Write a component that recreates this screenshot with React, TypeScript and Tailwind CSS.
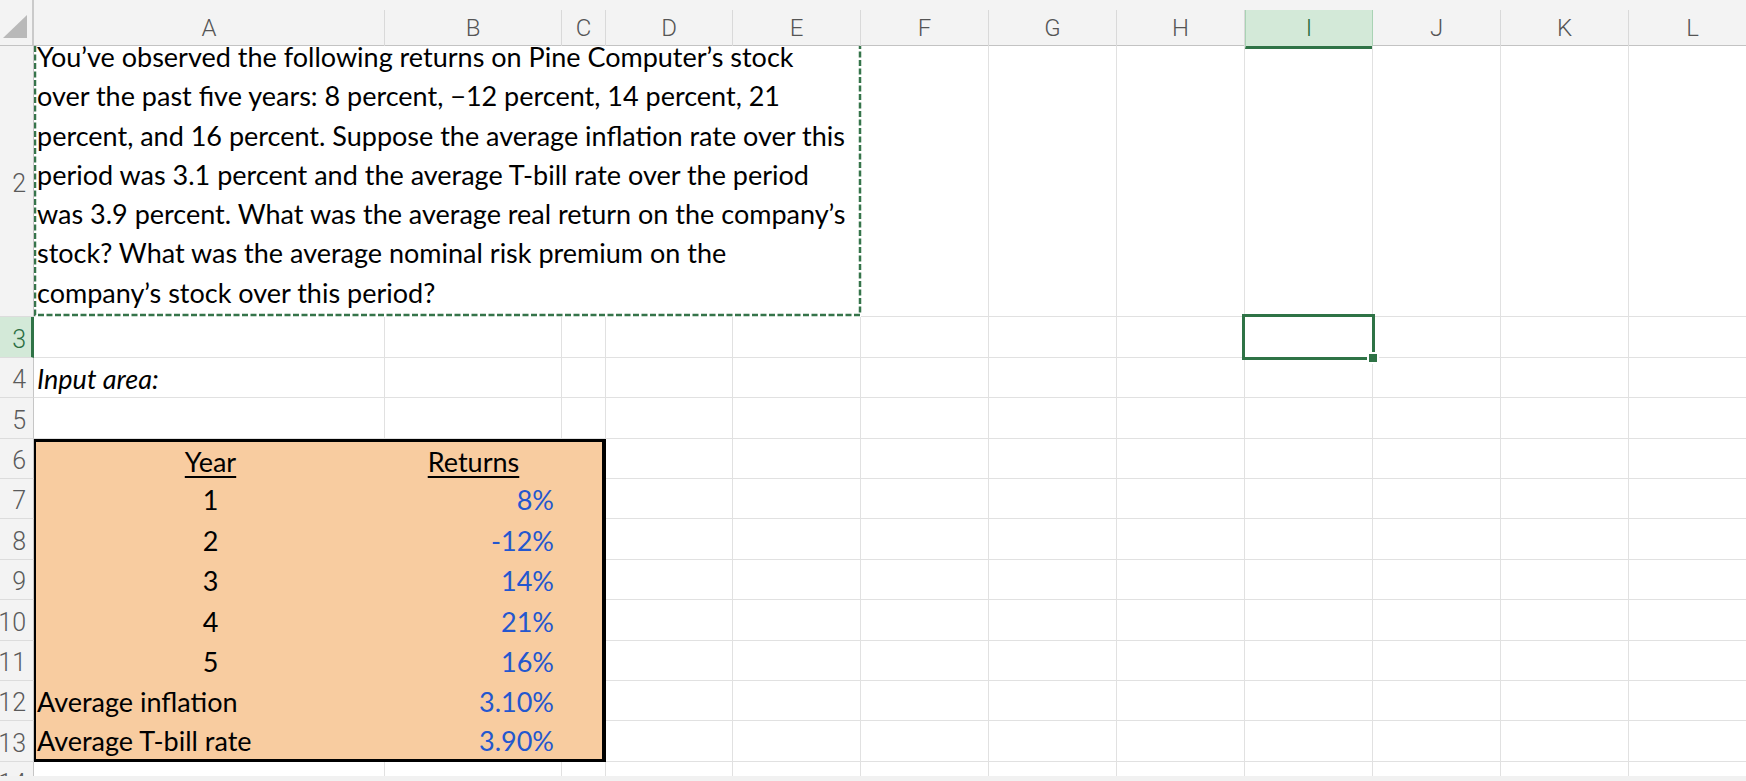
import React from 'react';

type Col = { k: string; w: string };

const COLS: Col[] = [
  { k: 'A', w: 'w-[351px]' },
  { k: 'B', w: 'w-[177px]' },
  { k: 'C', w: 'w-[44px]' },
  { k: 'D', w: 'w-[127px]' },
  { k: 'E', w: 'w-[128px]' },
  { k: 'F', w: 'w-[128px]' },
  { k: 'G', w: 'w-[128px]' },
  { k: 'H', w: 'w-[128px]' },
  { k: 'I', w: 'w-[128px]' },
  { k: 'J', w: 'w-[128px]' },
  { k: 'K', w: 'w-[128px]' },
  { k: 'L', w: 'w-[128px]' },
];

const LINES = [
  'You’ve observed the following returns on Pine Computer’s stock',
  'over the past five years: 8 percent, −12 percent, 14 percent, 21',
  'percent, and 16 percent. Suppose the average inflation rate over this',
  'period was 3.1 percent and the average T-bill rate over the period',
  'was 3.9 percent. What was the average real return on the company’s',
  'stock? What was the average nominal risk premium on the',
  'company’s stock over this period?',
];

type TRow = { n: string; h: string; a: string; b: string; kind: 'head' | 'num' | 'label' };

const TABLE: TRow[] = [
  { n: '6', h: 'h-[40px]', a: 'Year', b: 'Returns', kind: 'head' },
  { n: '7', h: 'h-[40px]', a: '1', b: '8%', kind: 'num' },
  { n: '8', h: 'h-[41px]', a: '2', b: '-12%', kind: 'num' },
  { n: '9', h: 'h-[40px]', a: '3', b: '14%', kind: 'num' },
  { n: '10', h: 'h-[41px]', a: '4', b: '21%', kind: 'num' },
  { n: '11', h: 'h-[40px]', a: '5', b: '16%', kind: 'num' },
  { n: '12', h: 'h-[40px]', a: 'Average inflation', b: '3.10%', kind: 'label' },
  { n: '13', h: 'h-[41px]', a: 'Average T-bill rate', b: '3.90%', kind: 'label' },
];

function RowHead({ n, selected }: { n: string; selected?: boolean }) {
  return (
    <div
      className={`w-[34px] shrink-0 flex items-center justify-end overflow-hidden whitespace-nowrap pt-[5px] border-b border-b-[#dcdcdc] text-[25px] font-light [font-family:Roboto,'Liberation_Sans',sans-serif] ${
        selected
          ? 'bg-[#d3e9d8] text-[#2b6f43] border-r-[3px] border-r-[#2f7346] pr-[5px]'
          : 'bg-[#f3f3f3] text-[#5a5a5a] border-r border-r-[#c6c6c6] pr-[7px]'
      }`}
    >
      {n}
    </div>
  );
}

function Cell({ w, children }: { w: string; children?: React.ReactNode }) {
  return (
    <div className={`${w} shrink-0 relative border-r border-b border-[#e1e1e1] flex items-center pt-[3px] pl-[3px] whitespace-nowrap text-[27px] text-black`}>
      {children}
    </div>
  );
}

function PlainRow({ n, h, selected, first }: { n: string; h: string; selected?: boolean; first?: React.ReactNode }) {
  return (
    <div className={`flex shrink-0 ${h}`}>
      <RowHead n={n} selected={selected} />
      {COLS.map((c, i) => (
        <Cell key={c.k} w={c.w}>
          {i === 0 ? first : null}
          {selected && c.k === 'I' ? (
            <div className="absolute -top-[3px] -left-[3px] -right-[3px] -bottom-[3px] border-[3px] border-[#2f7346] z-10">
              <div className="absolute -right-[7px] -bottom-[7px] w-[12px] h-[12px] bg-[#2f7346] border-2 border-white" />
            </div>
          ) : null}
        </Cell>
      ))}
    </div>
  );
}

function TableRow({ r, first, last }: { r: TRow; first: boolean; last: boolean }) {
  const blue = 'text-[#2457cf]';
  return (
    <div className={`flex shrink-0 ${r.h}`}>
      <RowHead n={r.n} />
      <div
        className={`w-[572px] shrink-0 flex bg-[#f8cca0] border-l-[2px] border-r-[4px] border-black text-[27px] whitespace-nowrap ${
          first ? 'border-t-[3px]' : ''
        } ${last ? 'border-b-[3px]' : ''}`}
      >
        <div
          className={`w-[349px] shrink-0 flex items-center pt-[3px] ${
            r.kind === 'label' ? 'justify-start pl-[1px]' : 'justify-center'
          }`}
        >
          {r.kind === 'head' ? (
            <span className="underline decoration-[2px] underline-offset-[4px]">{r.a}</span>
          ) : (
            <span>{r.a}</span>
          )}
        </div>
        <div
          className={`w-[177px] shrink-0 flex items-center pt-[3px] ${
            r.kind === 'head' ? 'justify-center' : `justify-end pr-[8px] ${blue}`
          }`}
        >
          {r.kind === 'head' ? (
            <span className="underline decoration-[2px] underline-offset-[4px]">{r.b}</span>
          ) : (
            <span>{r.b}</span>
          )}
        </div>
        <div className="flex-1" />
      </div>
      {COLS.slice(3).map((c) => (
        <Cell key={c.k} w={c.w} />
      ))}
    </div>
  );
}

export default function App() {
  return (
    <div className="w-[1746px] h-[781px] overflow-hidden flex flex-col bg-white [font-family:Lato,'Open_Sans',sans-serif] text-black">
      <div className="flex-1 min-h-0 overflow-hidden flex flex-col">
        {/* Column header */}
        <div className="flex h-[46px] shrink-0 bg-[#f3f3f3] border-b border-[#c3c3c3]">
          <div className="w-[34px] shrink-0 border-r-2 border-[#cacaca]">
            <svg width="32" height="45" viewBox="0 0 32 45">
              <polygon points="3,38 27,38 27,15" fill="#b9b9b9" />
            </svg>
          </div>
          {COLS.map((c) => (
            <div key={c.k} className={`${c.w} shrink-0 flex flex-col`}>
              <div className="h-[10px] shrink-0" />
              <div
                className={`flex-1 flex items-center justify-center text-[24px] font-light [font-family:Roboto,'Liberation_Sans',sans-serif] ${
                  c.k === 'I'
                    ? 'bg-[#d3e9d8] text-[#1f6b3b] border-x border-[#a9d3b4] border-b-[3px] border-b-[#2f7346]'
                    : 'text-[#555555] border-r border-[#d9d9d9]'
                }`}
              >
                {c.k}
              </div>
            </div>
          ))}
        </div>

        {/* Row 2: merged A2:E2 with wrapped text */}
        <div className="flex shrink-0 h-[271px]">
          <RowHead n="2" />
          <div className="w-[827px] shrink-0 relative flex flex-col justify-end pb-[5px] pl-[3px] text-[27px]">
            {LINES.map((l) => (
              <div key={l} className="leading-[39.3px] whitespace-nowrap">
                {l}
              </div>
            ))}
            <svg className="absolute left-0 top-0 z-10" width="828" height="272" viewBox="0 0 828 272">
              <path d="M1 0 V269 H826 V0" fill="none" stroke="#ffffff" strokeWidth="2.5" />
              <path
                d="M1 0 V269 H826 V0"
                fill="none"
                stroke="#35744a"
                strokeWidth="2.5"
                strokeDasharray="6 2.5"
              />
            </svg>
          </div>
          {COLS.slice(5).map((c) => (
            <Cell key={c.k} w={c.w} />
          ))}
        </div>

        <PlainRow n="3" h="h-[41px]" selected />
        <PlainRow n="4" h="h-[40px]" first={<span className="italic">Input area:</span>} />
        <PlainRow n="5" h="h-[41px]" />
        {TABLE.map((r, i) => (
          <TableRow key={r.n} r={r} first={i === 0} last={i === TABLE.length - 1} />
        ))}
        <PlainRow n="14" h="h-[40px]" />
      </div>
      <div className="h-[5px] shrink-0 bg-[#f1f1f1]" />
    </div>
  );
}
